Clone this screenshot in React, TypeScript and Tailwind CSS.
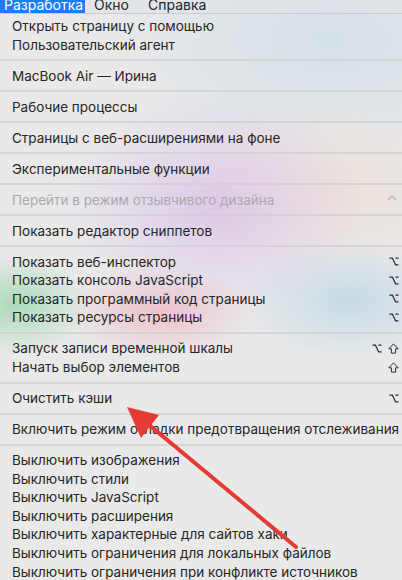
type Item = { label: string; keys?: ("opt" | "shift")[]; disabled?: boolean; chevron?: boolean };

const groups: Item[][] = [
  [{ label: "Открыть страницу с помощью" }, { label: "Пользовательский агент" }],
  [{ label: "MacBook Air — Ирина" }],
  [{ label: "Рабочие процессы" }],
  [{ label: "Страницы с веб-расширениями на фоне" }],
  [{ label: "Экспериментальные функции" }],
  [{ label: "Перейти в режим отзывчивого дизайна", disabled: true, chevron: true }],
  [{ label: "Показать редактор сниппетов" }],
  [
    { label: "Показать веб-инспектор", keys: ["opt"] },
    { label: "Показать консоль JavaScript", keys: ["opt"] },
    { label: "Показать программный код страницы", keys: ["opt"] },
    { label: "Показать ресурсы страницы", keys: ["opt"] },
  ],
  [
    { label: "Запуск записи временной шкалы", keys: ["opt", "shift"] },
    { label: "Начать выбор элементов", keys: ["shift"] },
  ],
  [{ label: "Очистить кэши", keys: ["opt"] }],
  [{ label: "Включить режим отладки предотвращения отслеживания" }],
  [
    { label: "Выключить изображения" },
    { label: "Выключить стили" },
    { label: "Выключить JavaScript" },
    { label: "Выключить расширения" },
    { label: "Выключить характерные для сайтов хаки" },
    { label: "Выключить ограничения для локальных файлов" },
    { label: "Выключить ограничения при конфликте источников" },
  ],
];

const OptKey = () => (
  <svg width="10" height="9" viewBox="0 0 10 9">
    <path d="M0.5 1.2 H3.4 L6.6 7.8 H9.5 M6.4 1.2 H9.5" fill="none" stroke="#2e2e2e" strokeWidth="1.2" />
  </svg>
);

const ShiftKey = () => (
  <svg width="11" height="11" viewBox="0 0 11 11">
    <path d="M5.5 0.9 L10.2 5.8 H7.6 V10.1 H3.4 V5.8 H0.8 Z" fill="none" stroke="#2e2e2e" strokeWidth="1" strokeLinejoin="round" />
  </svg>
);

const MenuRow = ({ item }: { item: Item }) => (
  <div className="flex h-[18.6px] items-center justify-between pl-[12px] pr-[3px]">
    <span className={item.disabled ? "whitespace-nowrap text-[#a9a9ab]" : "whitespace-nowrap text-[#262626]"}>
      {item.label}
    </span>
    {item.keys && (
      <span className="flex items-center gap-[6px]">
        {item.keys.map((k, i) => (k === "opt" ? <OptKey key={i} /> : <ShiftKey key={i} />))}
      </span>
    )}
    {item.chevron && (
      <svg width="10" height="6" viewBox="0 0 10 6" className="mr-[2px] -mt-[3px]">
        <polyline points="1,5 5,1 9,5" fill="none" stroke="#b3b3b5" strokeWidth="1.3" />
      </svg>
    )}
  </div>
);

export default function App() {
  return (
    <div className="relative h-[580px] w-full overflow-hidden bg-[#e9e9ea] font-[Inter,sans-serif] text-[13.5px] bg-[radial-gradient(ellipse_150px_110px_at_215px_205px,rgba(215,185,232,0.65),transparent),radial-gradient(ellipse_75px_50px_at_15px_305px,rgba(150,214,170,0.75),transparent),radial-gradient(ellipse_95px_45px_at_160px_312px,rgba(240,180,190,0.75),transparent),radial-gradient(ellipse_110px_60px_at_350px_300px,rgba(190,215,228,0.8),transparent),radial-gradient(ellipse_160px_90px_at_330px_190px,rgba(240,222,210,0.6),transparent),radial-gradient(ellipse_220px_120px_at_330px_40px,rgba(205,220,230,0.7),transparent)]">
      {/* menu bar */}
      <div className="flex h-[14px] items-start overflow-hidden border-b border-[#c9ccd0] bg-[#dfe3e7]/60">
        <div className="h-[14px] w-[85px] bg-[#1c7cf4] pl-[4px]">
          <span className="-mt-[5px] block text-[14px] leading-[20px] text-white">Разработка</span>
        </div>
        <span className="ml-[9px] -mt-[5px] block text-[14px] leading-[20px] text-[#262626]">Окно</span>
        <span className="ml-[19px] -mt-[5px] block text-[14px] leading-[20px] text-[#262626]">Справка</span>
      </div>

      {/* menu */}
      <div className="pt-[3px]">
        {groups.map((group, gi) => (
          <div key={gi}>
            {gi > 0 && (
              <div className="flex h-[12.4px] items-center">
                <div className="h-[2px] w-full bg-[#cfcfd1]/80" />
              </div>
            )}
            {group.map((item, ii) => (
              <MenuRow key={ii} item={item} />
            ))}
          </div>
        ))}
      </div>

      {/* red arrow */}
      <svg className="pointer-events-none absolute left-0 top-0" width="402" height="580" viewBox="0 0 402 580">
        <line x1="296" y1="547" x2="142" y2="419" stroke="#e53b34" strokeWidth="4" strokeLinecap="round" />
        <polygon points="127,407 159,415 141,438" fill="#e53b34" />
      </svg>
    </div>
  );
}
